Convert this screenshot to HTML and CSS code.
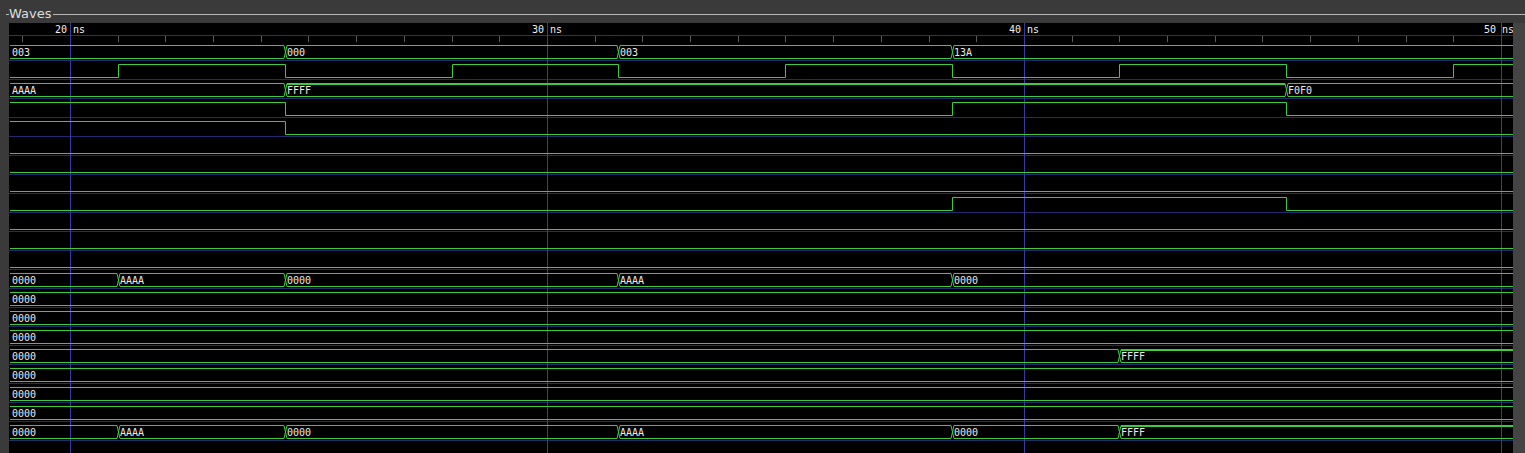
FILE: index.html
```html
<!DOCTYPE html>
<html lang="en">
<head>
<meta charset="utf-8">
<title>Waves</title>
<link rel="stylesheet" href="styles.css">
</head>
<body>
<div class="panel">
  <div class="groupbox-title">
    <span class="rule rule-lead"></span>
    <span class="title">Waves</span>
    <span class="rule rule-fill"></span>
  </div>
  <div class="groupbox-body">
    <div class="side side-left"></div>
    <div class="canvas">
      <svg class="waves" width="1504" height="430" viewBox="9 23 1504 430" xmlns="http://www.w3.org/2000/svg">
        <!-- ruler -->
        <path class="ruler-line" d="M9 35.5H1513"/>
        <path class="tick" d="M22.5 36V42M118.5 36V42M165.5 36V42M213.5 36V42M261.5 36V42M308.5 36V42M356.5 36V42M404.5 36V42M452.5 36V42M499.5 36V42M595.5 36V42M642.5 36V42M690.5 36V42M738.5 36V42M785.5 36V42M833.5 36V42M881.5 36V42M929.5 36V42M976.5 36V42M1072.5 36V42M1119.5 36V42M1167.5 36V42M1215.5 36V42M1262.5 36V42M1310.5 36V42M1358.5 36V42M1406.5 36V42M1453.5 36V42"/>
        <text class="lbl ruler-lbl" x="55" y="33">20 ns</text>
        <text class="lbl ruler-lbl" x="532" y="33">30 ns</text>
        <text class="lbl ruler-lbl" x="1009" y="33">40 ns</text>
        <text class="lbl ruler-lbl" x="1484" y="33">50 ns</text>

        <!-- row separators -->
        <path class="sep" d="M9 60.5H1513M9 79.5H1513M9 98.5H1513M9 117.5H1513M9 136.5H1513M9 155.5H1513M9 174.5H1513M9 193.5H1513M9 212.5H1513M9 231.5H1513M9 250.5H1513M9 269.5H1513M9 288.5H1513M9 307.5H1513M9 326.5H1513M9 345.5H1513M9 364.5H1513M9 383.5H1513M9 402.5H1513M9 421.5H1513M9 440.5H1513"/>

        <!-- major grid -->
        <path class="grid" d="M70.5 23V453M547.5 23V453M1024.5 23V453M1501.5 23V453"/>

        <!-- row 0 : bus -->
        <path class="sig" d="M10 45.5H284M287 45.5H617M620 45.5H951M954 45.5H1513M10 58.5H284M287 58.5H617M620 58.5H951M954 58.5H1513M284 45.5L287 58.5M284 58.5L287 45.5M617 45.5L620 58.5M617 58.5L620 45.5M951 45.5L954 58.5M951 58.5L954 45.5"/>
        <text class="lbl" x="12" y="56">003</text>
        <text class="lbl" x="287" y="56">000</text>
        <text class="lbl" x="620" y="56">003</text>
        <text class="lbl" x="954" y="56">13A</text>

        <!-- row 1 : clock -->
        <path class="sig" d="M10 77.5H118.5V64.5H285.5V77.5H452.5V64.5H618.5V77.5H785.5V64.5H952.5V77.5H1119.5V64.5H1286.5V77.5H1453.5V64.5H1513"/>

        <!-- row 2 : bus -->
        <path class="sig" d="M10 83.5H284M1288 83.5H1513M10 96.5H284M287 96.5H1285M1288 96.5H1513M284 83.5L287 96.5M284 96.5L287 83.5M1285 83.5L1288 96.5M1285 96.5L1288 83.5"/>
        <path class="sig thick" d="M287 84H1285"/>
        <text class="lbl" x="12" y="94">AAAA</text>
        <text class="lbl" x="287" y="94">FFFF</text>
        <text class="lbl" x="1288" y="94">F0F0</text>

        <!-- rows 3..11 : bits -->
        <path class="sig" d="M10 102.5H285.5V115.5H952.5V102.5H1286.5V115.5H1513"/>
        <path class="sig" d="M10 121.5H285.5V134.5H1513"/>
        <path class="sig" d="M10 153.5H1513"/>
        <path class="sig" d="M10 172.5H1513"/>
        <path class="sig" d="M10 191.5H1513"/>
        <path class="sig" d="M10 210.5H952.5V197.5H1286.5V210.5H1513"/>
        <path class="sig" d="M10 229.5H1513"/>
        <path class="sig" d="M10 248.5H1513"/>
        <path class="sig" d="M10 267.5H1513"/>

        <!-- row 12 : bus -->
        <path class="sig" d="M10 273.5H117M120 273.5H284M287 273.5H617M620 273.5H951M954 273.5H1513M10 286.5H117M120 286.5H284M287 286.5H617M620 286.5H951M954 286.5H1513M117 273.5L120 286.5M117 286.5L120 273.5M284 273.5L287 286.5M284 286.5L287 273.5M617 273.5L620 286.5M617 286.5L620 273.5M951 273.5L954 286.5M951 286.5L954 273.5"/>
        <text class="lbl" x="12" y="284">0000</text>
        <text class="lbl" x="120" y="284">AAAA</text>
        <text class="lbl" x="287" y="284">0000</text>
        <text class="lbl" x="620" y="284">AAAA</text>
        <text class="lbl" x="954" y="284">0000</text>

        <!-- rows 13..15 -->
        <path class="sig" d="M10 292.5H1513M10 305.5H1513"/>
        <text class="lbl" x="12" y="303">0000</text>
        <path class="sig" d="M10 311.5H1513M10 324.5H1513"/>
        <text class="lbl" x="12" y="322">0000</text>
        <path class="sig" d="M10 330.5H1513M10 343.5H1513"/>
        <text class="lbl" x="12" y="341">0000</text>

        <!-- row 16 -->
        <path class="sig" d="M10 349.5H1118M10 362.5H1118M1121 362.5H1513M1118 349.5L1121 362.5M1118 362.5L1121 349.5"/>
        <path class="sig thick" d="M1121 350H1513"/>
        <text class="lbl" x="12" y="360">0000</text>
        <text class="lbl" x="1121" y="360">FFFF</text>

        <!-- rows 17..19 -->
        <path class="sig" d="M10 368.5H1513M10 381.5H1513"/>
        <text class="lbl" x="12" y="379">0000</text>
        <path class="sig" d="M10 387.5H1513M10 400.5H1513"/>
        <text class="lbl" x="12" y="398">0000</text>
        <path class="sig" d="M10 406.5H1513M10 419.5H1513"/>
        <text class="lbl" x="12" y="417">0000</text>

        <!-- row 20 -->
        <path class="sig" d="M10 425.5H117M120 425.5H284M287 425.5H617M620 425.5H951M954 425.5H1118M10 438.5H117M120 438.5H284M287 438.5H617M620 438.5H951M954 438.5H1118M1121 438.5H1513M117 425.5L120 438.5M117 438.5L120 425.5M284 425.5L287 438.5M284 438.5L287 425.5M617 425.5L620 438.5M617 438.5L620 425.5M951 425.5L954 438.5M951 438.5L954 425.5M1118 425.5L1121 438.5M1118 438.5L1121 425.5"/>
        <path class="sig thick" d="M1121 426H1513"/>
        <text class="lbl" x="12" y="436">0000</text>
        <text class="lbl" x="120" y="436">AAAA</text>
        <text class="lbl" x="287" y="436">0000</text>
        <text class="lbl" x="620" y="436">AAAA</text>
        <text class="lbl" x="954" y="436">0000</text>
        <text class="lbl" x="1121" y="436">FFFF</text>
      </svg>
    </div>
    <div class="side side-right"></div>
  </div>
</div>
</body>
</html>
```

FILE: styles.css
```css
html, body {
  margin: 0;
  padding: 0;
  width: 100%;
  height: 100%;
  overflow: hidden;
  background: #3a3a3a;
}

.panel {
  width: 1525px;
  height: 453px;
  display: flex;
  flex-direction: column;
}

.groupbox-title {
  flex: none;
  height: 23px;
  display: flex;
  align-items: flex-start;
}

.rule {
  height: 1px;
  margin-top: 14px;
  background: #b8b8b8;
}

.rule-lead {
  width: 3px;
  margin-left: 6px;
}

.title {
  font-family: "DejaVu Sans", "Liberation Sans", sans-serif;
  font-size: 13px;
  line-height: 15px;
  margin-top: 6px;
  padding-right: 2px;
  color: #dedede;
}

.rule-fill {
  flex: 1;
}

.groupbox-body {
  flex: 1;
  min-height: 0;
  display: flex;
}

.side-left {
  width: 9px;
  flex: none;
}

.canvas {
  width: 1504px;
  flex: none;
  background: #000;
}

.side-right {
  flex: 1;
  background: #444444;
}

.waves {
  display: block;
}

.ruler-line {
  stroke: #2c2c80;
  stroke-width: 1;
  fill: none;
}

.tick {
  stroke: #5c5c5c;
  stroke-width: 1;
  fill: none;
}

.sep {
  stroke: #28286e;
  stroke-width: 1;
  fill: none;
}

.grid {
  stroke: #3a3aa0;
  stroke-width: 1;
  fill: none;
}

.sig {
  stroke: #3ecc3e;
  stroke-width: 1;
  fill: none;
}

.thick {
  stroke-width: 2;
}

.lbl {
  font-family: "DejaVu Sans Mono", "Liberation Mono", monospace;
  font-size: 10px;
  fill: #ebebeb;
}

.ruler-lbl {
  fill: #f0f0f0;
}
```
